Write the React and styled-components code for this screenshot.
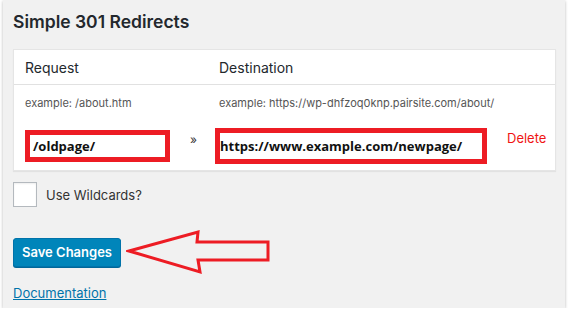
import React from "react";
import styled, { createGlobalStyle } from "styled-components";

const Global = createGlobalStyle`
  html, body { margin: 0; padding: 0; background: #ffffff; }
  body { font-family: Inter, "Noto Sans", sans-serif; -webkit-font-smoothing: antialiased; }
  * { box-sizing: border-box; }
`;

const Panel = styled.div`
  margin-left: 3px;
  width: 562px;
  height: 308px;
  background: #f1f1f1;
  box-shadow: 0 1px 3px rgba(0, 0, 0, 0.28);
  padding-left: 10px;
  display: flex;
  flex-direction: column;
  overflow: hidden;
  & > * { flex-shrink: 0; }
`;

const Title = styled.h2`
  margin: 0;
  height: 49px;
  padding-top: 11px;
  font-size: 17.5px;
  line-height: 22px;
  font-weight: 600;
  color: #23282d;
`;

const Table = styled.div`
  width: 543px;
  background: #fff;
  border: 1px solid #e5e5e5;
  box-shadow: 0 1px 1px rgba(0, 0, 0, 0.06);
`;

const Row = styled.div`
  display: grid;
  grid-template-columns: 145px 45px 272px 1fr;
  align-items: center;
  padding-left: 11px;
  height: ${(p) => p.$h}px;
  border-bottom: ${(p) => (p.$line ? "1px solid #e1e1e1" : "none")};
`;

const Head = styled.div`
  font-size: 14px;
  color: #23282d;
  padding-left: ${(p) => p.$pad || 0}px;
`;

const Example = styled.div`
  font-size: 11px;
  color: #555;
  white-space: nowrap;
  padding-left: ${(p) => p.$pad || 0}px;
`;

const Field = styled.div`
  height: ${(p) => p.$h}px;
  border: 5px solid #ed1c24;
  background: #fff;
  display: flex;
  align-items: center;
  padding-left: ${(p) => p.$pad}px;
  font-family: "Open Sans", sans-serif;
  font-weight: 700;
  font-size: 13px;
  color: #111;
  white-space: nowrap;
  overflow: hidden;
`;

const Sep = styled.div`
  text-align: center;
  font-size: 12px;
  color: #333;
  padding-left: 2px;
  padding-bottom: 12px;
`;

const Delete = styled.a`
  font-size: 13px;
  color: #f01414;
  padding-left: 20px;
  padding-bottom: 15px;
  text-decoration: none;
`;

const CheckRow = styled.label`
  display: flex;
  align-items: center;
  gap: 9px;
  margin-top: 11px;
  font-size: 13px;
  color: #333;
`;

const Box = styled.span`
  width: 24px;
  height: 25px;
  background: #fff;
  border: 1px solid #b4b9be;
  box-shadow: inset 0 1px 2px rgba(0, 0, 0, 0.07);
`;

const ActionRow = styled.div`
  display: flex;
  align-items: center;
  gap: 5px;
  margin-top: 22px;
`;

const Button = styled.button`
  width: 108px;
  height: 29px;
  background: #0085ba;
  border: 1px solid #0073aa;
  border-radius: 3px;
  box-shadow: 0 1px 0 #006799;
  color: #fff;
  font-family: Inter, sans-serif;
  font-weight: 600;
  font-size: 13px;
  padding: 0;
`;

const Doc = styled.a`
  margin-top: 9px;
  font-size: 13px;
  line-height: 18px;
  color: #0073aa;
  text-decoration: underline;
  align-self: flex-start;
`;

function Arrow() {
  return (
    <svg width="145" height="46" viewBox="126 231 145 46">
      <polygon
        points="129,253 198,234 197,244 268,244 268,262 198,262 200,274"
        fill="none"
        stroke="#ed1c24"
        strokeWidth="3"
        strokeLinejoin="miter"
      />
    </svg>
  );
}

export default function App() {
  return (
    <>
      <Global />
      <Panel>
        <Title>Simple 301 Redirects</Title>
        <Table>
          <Row $h={35} $line>
            <Head>Request</Head>
            <span />
            <Head $pad={4}>Destination</Head>
            <span />
          </Row>
          <Row $h={36}>
            <Example>example: /about.htm</Example>
            <span />
            <Example $pad={4}>example: https://wp-dhfzoq0knp.pairsite.com/about/</Example>
            <span />
          </Row>
          <Row $h={49}>
            <Field $h={32} $pad={3}>/oldpage/</Field>
            <Sep>»</Sep>
            <Field $h={36} $pad={0}>https://www.example.com/newpage/</Field>
            <Delete>Delete</Delete>
          </Row>
        </Table>
        <CheckRow>
          <Box />
          Use Wildcards?
        </CheckRow>
        <ActionRow>
          <Button>Save Changes</Button>
          <Arrow />
        </ActionRow>
        <Doc>Documentation</Doc>
      </Panel>
    </>
  );
}
